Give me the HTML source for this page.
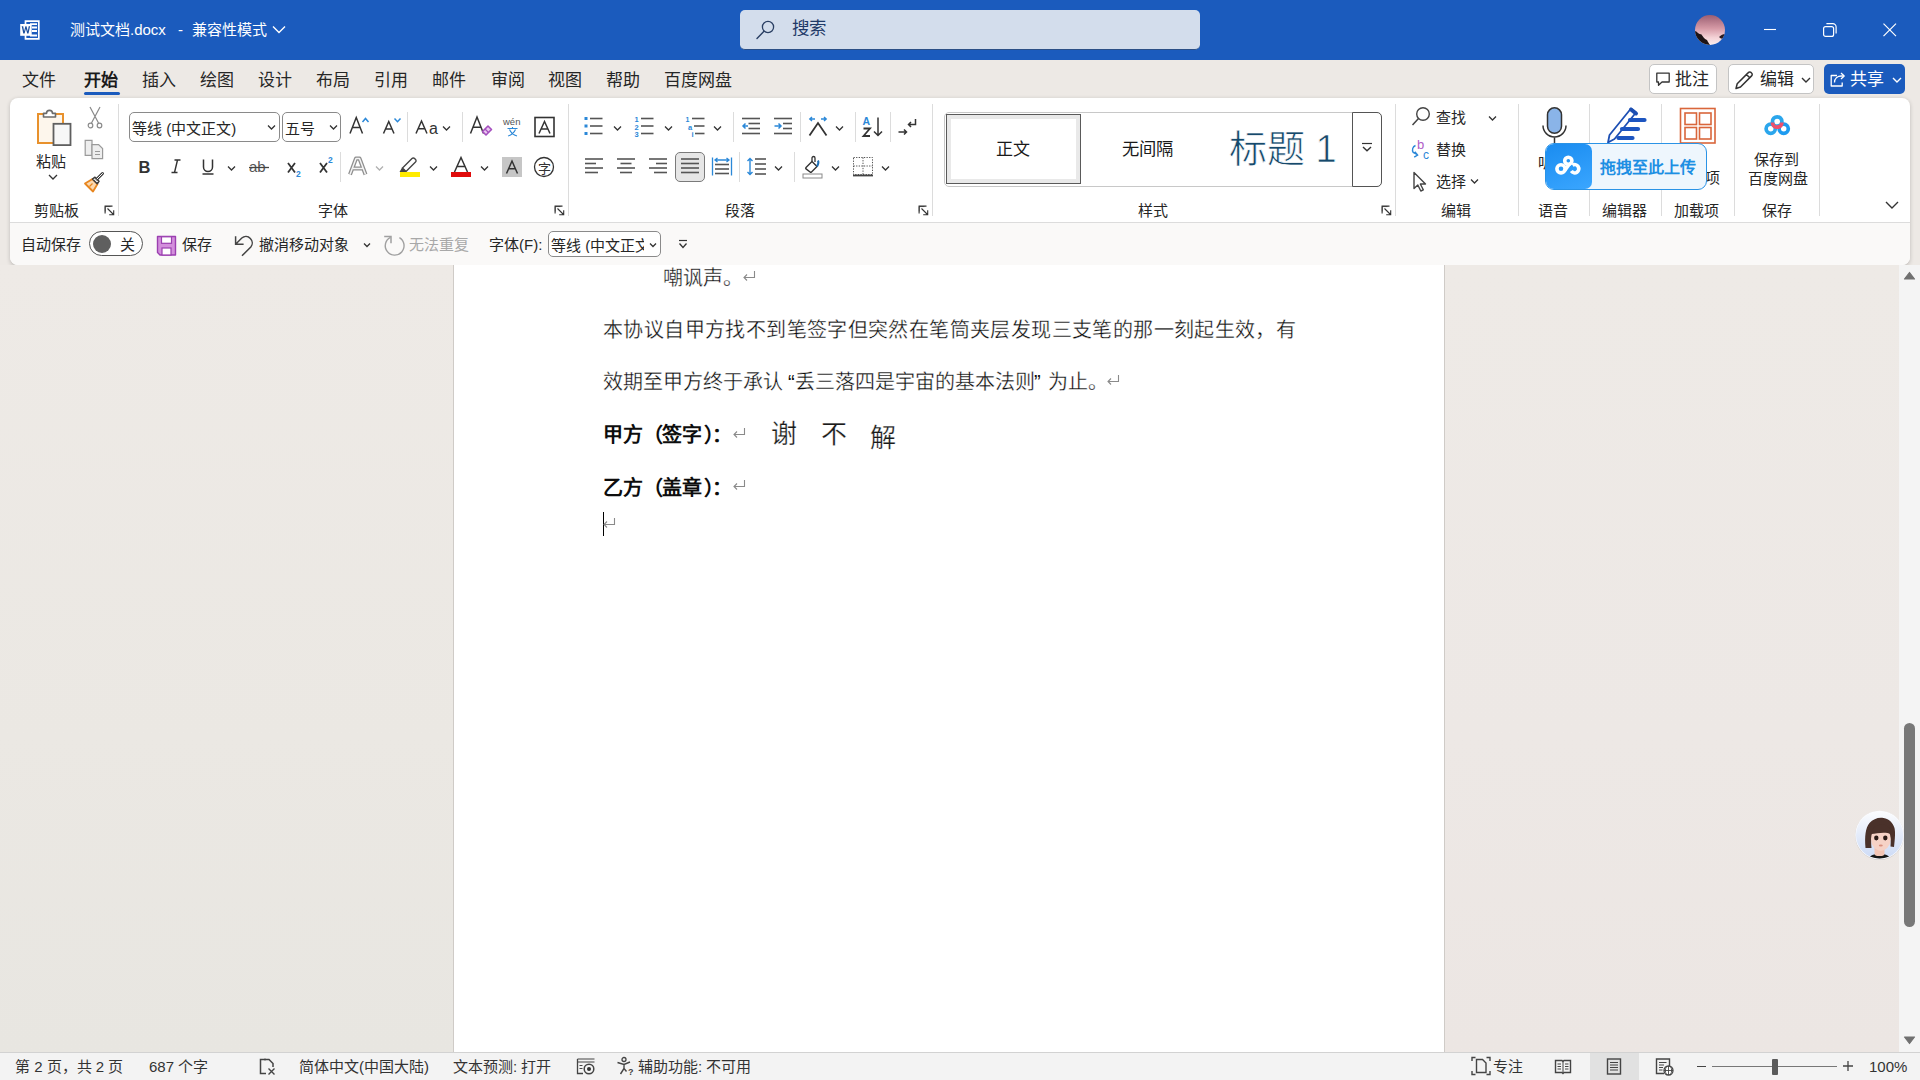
<!DOCTYPE html>
<html lang="zh-CN"><head><meta charset="utf-8"><style>
html,body{margin:0;padding:0;}
body{width:1920px;height:1080px;overflow:hidden;position:relative;background:#ede9e5;font-family:"Liberation Sans",sans-serif;}
.a{position:absolute;}
.t{position:absolute;line-height:1;white-space:nowrap;}
</style></head><body>
<div class="a" style="left:0px;top:0px;width:1920px;height:60px;background:#1b5bbd"></div><div class="a" style="left:10px;top:98px;width:1900px;height:167px;background:#fff;border-radius:8px;box-shadow:0 1.5px 4px rgba(0,0,0,.2)"></div><div class="a" style="left:10px;top:223px;width:1900px;height:42px;background:#faf9f8;border-radius:0 0 8px 8px"></div><div class="a" style="left:10px;top:222px;width:1900px;height:1px;background:#dcdcdc"></div><div class="a" style="left:0px;top:265px;width:453px;height:787px;background:linear-gradient(180deg,#eeeae6 0%,#ebe8e3 60%,#e8e6e1 100%)"></div><div class="a" style="left:1445px;top:265px;width:454px;height:787px;background:linear-gradient(180deg,#eeeae6 0%,#ede8e5 60%,#ece6e3 100%)"></div><div class="a" style="left:453px;top:265px;width:992px;height:787px;background:#fff;border-left:1px solid #cfcbc7;border-right:1px solid #cfcbc7;box-sizing:border-box"></div><div class="a" style="left:1899px;top:265px;width:21px;height:787px;background:#f4f4f4"></div><div class="a" style="left:0px;top:1052px;width:1920px;height:28px;background:#f3f3f3;border-top:1px solid #d2d2d2;box-sizing:border-box"></div><div class="t" style="left:70px;top:22px;font-size:15px;color:#fff;font-weight:400;">测试文档.docx</div><div class="t" style="left:178px;top:22px;font-size:15px;color:#fff;font-weight:400;">-</div><div class="t" style="left:192px;top:22px;font-size:15px;color:#fff;font-weight:400;">兼容性模式</div><div class="a" style="left:740px;top:10px;width:460px;height:40px;background:#d3ddec;border-radius:5px;border-bottom:1px solid #2b4f86;box-sizing:border-box"></div><div class="t" style="left:792px;top:20px;font-size:17.5px;color:#1f3a68;font-weight:400;">搜索</div><div class="t" style="left:22px;top:72px;font-size:17px;color:#262626;font-weight:400;">文件</div><div class="t" style="left:142px;top:72px;font-size:17px;color:#262626;font-weight:400;">插入</div><div class="t" style="left:200px;top:72px;font-size:17px;color:#262626;font-weight:400;">绘图</div><div class="t" style="left:258px;top:72px;font-size:17px;color:#262626;font-weight:400;">设计</div><div class="t" style="left:316px;top:72px;font-size:17px;color:#262626;font-weight:400;">布局</div><div class="t" style="left:374px;top:72px;font-size:17px;color:#262626;font-weight:400;">引用</div><div class="t" style="left:432px;top:72px;font-size:17px;color:#262626;font-weight:400;">邮件</div><div class="t" style="left:491px;top:72px;font-size:17px;color:#262626;font-weight:400;">审阅</div><div class="t" style="left:548px;top:72px;font-size:17px;color:#262626;font-weight:400;">视图</div><div class="t" style="left:606px;top:72px;font-size:17px;color:#262626;font-weight:400;">帮助</div><div class="t" style="left:664px;top:72px;font-size:17px;color:#262626;font-weight:400;">百度网盘</div><div class="t" style="left:84px;top:72px;font-size:17px;color:#1a1a1a;font-weight:700;">开始</div><div class="a" style="left:84px;top:92px;width:36px;height:3px;background:#1b5bbd;border-radius:2px"></div><div class="a" style="left:1649px;top:64px;width:68px;height:30px;background:#fff;border:1px solid #c4c4c4;border-radius:5px;box-sizing:border-box"></div><div class="t" style="left:1675px;top:71px;font-size:17px;color:#262626;font-weight:400;">批注</div><div class="a" style="left:1728px;top:64px;width:86px;height:30px;background:#fff;border:1px solid #c4c4c4;border-radius:5px;box-sizing:border-box"></div><div class="t" style="left:1760px;top:71px;font-size:17px;color:#262626;font-weight:400;">编辑</div><div class="a" style="left:1824px;top:64px;width:81px;height:30px;background:#1b5bbd;border-radius:5px"></div><div class="t" style="left:1850px;top:71px;font-size:17px;color:#fff;font-weight:400;">共享</div><div class="t" style="left:36px;top:154px;font-size:15px;color:#262626;font-weight:400;">粘贴</div><div class="t" style="left:34px;top:203px;font-size:15px;color:#262626;font-weight:400;">剪贴板</div><div class="t" style="left:318px;top:203px;font-size:15px;color:#262626;font-weight:400;">字体</div><div class="t" style="left:725px;top:203px;font-size:15px;color:#262626;font-weight:400;">段落</div><div class="t" style="left:1138px;top:203px;font-size:15px;color:#262626;font-weight:400;">样式</div><div class="t" style="left:1441px;top:203px;font-size:15px;color:#262626;font-weight:400;">编辑</div><div class="t" style="left:1538px;top:203px;font-size:15px;color:#262626;font-weight:400;">语音</div><div class="t" style="left:1602px;top:203px;font-size:15px;color:#262626;font-weight:400;">编辑器</div><div class="t" style="left:1674px;top:203px;font-size:15px;color:#262626;font-weight:400;">加载项</div><div class="t" style="left:1762px;top:203px;font-size:15px;color:#262626;font-weight:400;">保存</div><div class="a" style="left:129px;top:112px;width:151px;height:30px;background:#fff;border:1px solid #8a8a8a;border-radius:5px;box-sizing:border-box"></div><div class="t" style="left:132px;top:121px;font-size:15px;color:#262626;font-weight:400;">等线 (中文正文)</div><div class="a" style="left:282px;top:112px;width:59px;height:30px;background:#fff;border:1px solid #8a8a8a;border-radius:5px;box-sizing:border-box"></div><div class="t" style="left:285px;top:121px;font-size:15px;color:#262626;font-weight:400;">五号</div><div class="a" style="left:944px;top:112px;width:438px;height:75px;background:#fff;border:1px solid #c8c8c8;border-radius:5px;box-sizing:border-box"></div><div class="a" style="left:946px;top:114px;width:135px;height:70px;background:#fff;border:1px solid #5a5a5a;box-shadow:inset 0 0 0 4px #e9e9e9;box-sizing:border-box"></div><div class="t" style="left:996px;top:141px;font-size:17px;color:#1a1a1a;font-weight:400;">正文</div><div class="t" style="left:1122px;top:141px;font-size:17.3px;color:#1a1a1a;font-weight:400;">无间隔</div><div class="t" style="left:1229px;top:130px;font-size:38px;color:#16496b;font-weight:300;-webkit-text-stroke:0.7px #fff">标题 1</div><div class="a" style="left:1352px;top:112px;width:30px;height:75px;background:#fff;border:1px solid #555;border-radius:0 5px 5px 0;box-sizing:border-box"></div><div class="t" style="left:1436px;top:110px;font-size:15px;color:#262626;font-weight:400;">查找</div><div class="t" style="left:1436px;top:142px;font-size:15px;color:#262626;font-weight:400;">替换</div><div class="t" style="left:1436px;top:174px;font-size:15px;color:#262626;font-weight:400;">选择</div><div class="t" style="left:1538px;top:155px;font-size:15px;color:#262626;font-weight:400;">听写</div><div class="t" style="left:1675px;top:170px;font-size:15px;color:#262626;font-weight:400;">加载项</div><div class="t" style="left:1754px;top:152px;font-size:15px;color:#262626;font-weight:400;">保存到</div><div class="t" style="left:1748px;top:171px;font-size:15px;color:#262626;font-weight:400;">百度网盘</div><div class="t" style="left:21px;top:237px;font-size:15px;color:#262626;font-weight:400;">自动保存</div><div class="t" style="left:120px;top:237px;font-size:15px;color:#262626;font-weight:400;">关</div><div class="t" style="left:182px;top:237px;font-size:15px;color:#262626;font-weight:400;">保存</div><div class="t" style="left:259px;top:237px;font-size:15px;color:#262626;font-weight:400;">撤消移动对象</div><div class="t" style="left:409px;top:237px;font-size:15px;color:#a8a8a8;font-weight:400;">无法重复</div><div class="t" style="left:489px;top:237px;font-size:15px;color:#262626;font-weight:400;">字体(F):</div><div class="a" style="left:548px;top:231px;width:113px;height:26px;background:#fff;border:1px solid #8a8a8a;border-radius:5px;box-sizing:border-box"></div><div class="t" style="left:551px;top:238px;font-size:15px;color:#262626;font-weight:400;width:93px;overflow:hidden">等线 (中文正文</div><div class="t" style="left:663px;top:268px;font-size:20px;color:#0d0d0d;font-weight:400;-webkit-text-stroke:0.3px #fff;">嘲讽声</div><div class="t" style="left:723px;top:268px;font-size:20px;color:#0d0d0d;font-weight:400;-webkit-text-stroke:0.3px #fff;">。</div><div class="t" style="left:603px;top:320px;font-size:20px;color:#0d0d0d;font-weight:400;-webkit-text-stroke:0.3px #fff;letter-spacing:0.39px">本协议自甲方找不到笔签字但突然在笔筒夹层发现三支笔的那一刻起生效，有</div><div class="t" style="left:603px;top:372px;font-size:20px;color:#0d0d0d;font-weight:400;-webkit-text-stroke:0.3px #fff;">效期至甲方终于承认</div><div class="t" style="left:788px;top:372px;font-size:20px;color:#0d0d0d;font-weight:400;">“</div><div class="t" style="left:795px;top:372px;font-size:20px;color:#0d0d0d;font-weight:400;-webkit-text-stroke:0.3px #fff;">丢三落四是宇宙的基本法则</div><div class="t" style="left:1034px;top:372px;font-size:20px;color:#0d0d0d;font-weight:400;">”</div><div class="t" style="left:1048px;top:372px;font-size:20px;color:#0d0d0d;font-weight:400;-webkit-text-stroke:0.3px #fff;">为止。</div><div class="t" style="left:603px;top:425px;font-size:20px;color:#0d0d0d;font-weight:700;">甲方</div><div class="t" style="left:643px;top:425px;font-size:20px;color:#0d0d0d;font-weight:700;">（</div><div class="t" style="left:662px;top:425px;font-size:20px;color:#0d0d0d;font-weight:700;">签字</div><div class="t" style="left:704px;top:425px;font-size:20px;color:#0d0d0d;font-weight:700;">）</div><div class="t" style="left:712px;top:425px;font-size:20px;color:#0d0d0d;font-weight:700;">：</div><div class="t" style="left:603px;top:478px;font-size:20px;color:#0d0d0d;font-weight:700;">乙方</div><div class="t" style="left:643px;top:478px;font-size:20px;color:#0d0d0d;font-weight:700;">（</div><div class="t" style="left:662px;top:478px;font-size:20px;color:#0d0d0d;font-weight:700;">盖章</div><div class="t" style="left:704px;top:478px;font-size:20px;color:#0d0d0d;font-weight:700;">）</div><div class="t" style="left:712px;top:478px;font-size:20px;color:#0d0d0d;font-weight:700;">：</div><div class="t" style="left:771px;top:421px;font-size:26px;color:#1a1a1a;font-weight:300;-webkit-text-stroke:0.25px #fff">谢</div><div class="t" style="left:821px;top:421px;font-size:26px;color:#1a1a1a;font-weight:300;-webkit-text-stroke:0.25px #fff">不</div><div class="t" style="left:870px;top:425px;font-size:26px;color:#1a1a1a;font-weight:300;-webkit-text-stroke:0.25px #fff">解</div><div class="a" style="left:603px;top:512px;width:1px;height:24px;background:#000"></div><div class="t" style="left:15px;top:1059px;font-size:15px;color:#333;font-weight:400;">第 2 页，共 2 页</div><div class="t" style="left:149px;top:1059px;font-size:15px;color:#333;font-weight:400;">687 个字</div><div class="t" style="left:299px;top:1059px;font-size:15px;color:#333;font-weight:400;">简体中文(中国大陆)</div><div class="t" style="left:453px;top:1059px;font-size:15px;color:#333;font-weight:400;">文本预测: 打开</div><div class="t" style="left:638px;top:1059px;font-size:15px;color:#333;font-weight:400;">辅助功能: 不可用</div><div class="t" style="left:1493px;top:1059px;font-size:15px;color:#333;font-weight:400;">专注</div><div class="t" style="left:1869px;top:1059px;font-size:15px;color:#333;font-weight:400;">100%</div><svg class="a" style="left:18px;top:18px;" width="24" height="24" viewBox="0 0 24 24"><path d="M7.5 3.2h13.3v17.6H7.5z" fill="none" stroke="#fff" stroke-width="1.7"/><path d="M12 6.2h7M14 9.5h5M14 13h5M12 17.5h7" stroke="#fff" stroke-width="1.8"/><rect x="2.2" y="6" width="11.5" height="11.8" fill="#fff"/><path d="M3.7 8.3l1.6 7.2h1.3l1.3-4.8 1.3 4.8h1.3l1.6-7.2h-1.4l-.9 4.9-1.3-4.9H7.4l-1.3 4.9-.9-4.9z" fill="#1b4f9e"/></svg><svg class="a" style="left:752px;top:17px;" width="24" height="24" viewBox="0 0 24 24"><circle cx="16" cy="10" r="5.6" fill="none" stroke="#2a3f63" stroke-width="1.3"/><path d="M12 14.2L5 21.5" stroke="#2a3f63" stroke-width="1.4" stroke-linecap="round"/></svg><svg class="a" style="left:270px;top:23px;" width="18" height="12" viewBox="0 0 18 12"><path d="M3 3.5l6 6 6-6" fill="none" stroke="#fff" stroke-width="1.4"/></svg><div class="a" style="left:1695px;top:15px;width:30px;height:30px;border-radius:50%;overflow:hidden;background:linear-gradient(180deg,#9a5e72 0%,#d69aa6 45%,#f4d2d6 75%,#fbeeee 100%)"><svg width="30" height="30" style="position:absolute;left:0;top:0"><path d="M0 16 C3 17 4 20 6 19 C8 21 9 24 12 25 C13 27 15 30 15 30 L0 30Z" fill="#1d1416"/><path d="M24 22 C26 20 28 19 30 19 L30 24 C28 24 26 24 24 22Z" fill="#2a1c20"/></svg></div><svg class="a" style="left:1760px;top:20px;" width="20" height="20" viewBox="0 0 20 20"><path d="M4 9.5h12" stroke="#fff" stroke-width="1.1"/></svg><svg class="a" style="left:1820px;top:20px;" width="20" height="20" viewBox="0 0 20 20"><rect x="3.6" y="6.6" width="10" height="9.8" rx="2" fill="none" stroke="#fff" stroke-width="1.2"/><path d="M6.4 3.6h6.4a3.3 3.3 0 0 1 3.3 3.3v6.5" fill="none" stroke="#fff" stroke-width="1.2"/></svg><svg class="a" style="left:1880px;top:20px;" width="20" height="20" viewBox="0 0 20 20"><path d="M3.5 3.7l12.5 12.5M16 3.7L3.5 16.2" stroke="#fff" stroke-width="1.2"/></svg><svg class="a" style="left:1654px;top:70px;" width="18" height="18" viewBox="0 0 18 18"><path d="M2.8 3.2h12.4v8.8H8l-3.5 3.2v-3.2H2.8z" fill="none" stroke="#333" stroke-width="1.3" stroke-linejoin="round"/></svg><svg class="a" style="left:1732px;top:68px;" width="24" height="24" viewBox="0 0 24 24"><path d="M4 20.5l1.2-4.8L16.3 4.6a2 2 0 0 1 2.9 0l.4.4a2 2 0 0 1 0 2.9L8.5 19z M4 20.5l4.5-1.5 M14.5 6.5l3.2 3.2" fill="none" stroke="#333" stroke-width="1.5" stroke-linejoin="round"/></svg><svg class="a" style="left:1799px;top:75px;" width="14" height="10" viewBox="0 0 14 10"><path d="M3 3l4 4 4-4" fill="none" stroke="#333" stroke-width="1.4"/></svg><svg class="a" style="left:1828px;top:70px;" width="20" height="20" viewBox="0 0 20 20"><path d="M9 5.5H3.2v10.5h11v-3.5" fill="none" stroke="#fff" stroke-width="1.3" stroke-linejoin="round"/><path d="M6.5 12.5c0-4 3-6.5 7-6.5h2" fill="none" stroke="#fff" stroke-width="1.3"/><path d="M13 3l3.2 3-3.2 3" fill="none" stroke="#fff" stroke-width="1.3" stroke-linejoin="round"/></svg><svg class="a" style="left:1890px;top:75px;" width="14" height="10" viewBox="0 0 14 10"><path d="M3 3l4 4 4-4" fill="none" stroke="#fff" stroke-width="1.4"/></svg><svg class="a" style="left:30px;top:104px;" width="48" height="46" viewBox="0 0 48 46"><rect x="8" y="10" width="25" height="29" fill="#fdf6ec" stroke="#e8912c" stroke-width="2"/><path d="M13.5 13v-3.6h3a3 3 0 0 1 6 0h3V13z" fill="#fff" stroke="#6b6b6b" stroke-width="1.6" stroke-linejoin="round"/><rect x="23.5" y="19.8" width="17" height="21.3" fill="#f7f7f7" stroke="#5f5f5f" stroke-width="1.8"/></svg><svg class="a" style="left:47px;top:172px;" width="12" height="10" viewBox="0 0 12 10"><path d="M2 3l4 4 4-4" fill="none" stroke="#333" stroke-width="1.3"/></svg><svg class="a" style="left:84px;top:104px;" width="22" height="26" viewBox="0 0 22 26"><path d="M6 3l8.5 16M16 3L7.5 19" stroke="#8a8a8a" stroke-width="1.2"/><circle cx="6.5" cy="21.5" r="2.3" fill="#fff" stroke="#8a8a8a" stroke-width="1.2"/><circle cx="15.5" cy="21.5" r="2.3" fill="#fff" stroke="#8a8a8a" stroke-width="1.2"/></svg><svg class="a" style="left:82px;top:137px;" width="24" height="24" viewBox="0 0 24 24"><path d="M3.2 3.4h6.8v15H3.2z" fill="#eee" stroke="#9a9a9a" stroke-width="1.2"/><path d="M10 7.6h6.6l4 4v10h-10.6z" fill="#eee" stroke="#9a9a9a" stroke-width="1.2"/><path d="M13 14.5h5M13 17.5h5" stroke="#9a9a9a" stroke-width="1.1"/></svg><svg class="a" style="left:82px;top:169px;" width="24" height="24" viewBox="0 0 24 24"><path d="M3 14.5l7.5-4.5 5 5-4.5 7.5z" fill="#fbd9b0" stroke="#e8861f" stroke-width="1.8" stroke-linejoin="round"/><path d="M7.5 17.5l3-3" stroke="#e8861f" stroke-width="1.3"/><path d="M10.5 10l2.5-1.8 4 4-1.8 2.5z" fill="#fff" stroke="#3c3c3c" stroke-width="1.5" stroke-linejoin="round"/><path d="M15 10l5.5-5.5" stroke="#3c3c3c" stroke-width="3" stroke-linecap="round"/><path d="M15 10l5.5-5.5" stroke="#fff" stroke-width="1" stroke-linecap="round"/></svg><svg class="a" style="left:104px;top:205px;" width="11" height="11" viewBox="0 0 11 11"><path d="M1 9.5V1.5h8.5" fill="none" stroke="#333" stroke-width="1.2" transform="scale(0.62) translate(1,1)"/><path d="M0.8 0.8v8.8" stroke="#444" stroke-width="0"/><path d="M1 1v9h9" fill="none" stroke="none"/><path d="M1.1 8.5V1.1H8.5" fill="none" stroke="#333" stroke-width="1.1"/><path d="M3.5 3.5L9.5 9.5M9.7 5.2v4.5H5.2" fill="none" stroke="#333" stroke-width="1.1"/></svg><div class="a" style="left:118px;top:104px;width:1px;height:112px;background:#dcdcdc"></div><svg class="a" style="left:266px;top:123px;" width="11" height="8" viewBox="0 0 11 8"><path d="M2 2.5l3.5 3.5l3.5 -3.5" fill="none" stroke="#333" stroke-width="1.3"/></svg><svg class="a" style="left:328px;top:123px;" width="11" height="8" viewBox="0 0 11 8"><path d="M2 2.5l3.5 3.5l3.5 -3.5" fill="none" stroke="#333" stroke-width="1.3"/></svg><svg class="a" style="left:345px;top:112px;" width="30" height="26" viewBox="0 0 30 26"><path d="M5 21.5L11.25 5.5L17.5 21.5M7.5 15.42H15.0" fill="none" stroke="#333" stroke-width="1.5"/><path d="M17.5 10l3-3.5 3 3.5" fill="none" stroke="#2b88d8" stroke-width="1.5"/></svg><svg class="a" style="left:380px;top:112px;" width="26" height="26" viewBox="0 0 26 26"><path d="M3.5 21.5L8.75 9.5L14.0 21.5M5.6 16.939999999999998H11.9" fill="none" stroke="#333" stroke-width="1.5"/><path d="M14.5 6.5l3 3.2 3-3.2" fill="none" stroke="#2b88d8" stroke-width="1.5"/></svg><div class="a" style="left:407px;top:112px;width:1px;height:30px;background:#dcdcdc"></div><svg class="a" style="left:412px;top:112px;" width="30" height="26" viewBox="0 0 30 26"><path d="M4 21.5L9.5 9L15 21.5M6.2 16.75H12.8" fill="none" stroke="#333" stroke-width="1.5"/><text x="17" y="21.5" font-family="Liberation Sans" font-size="16" fill="#333">a</text></svg><svg class="a" style="left:441px;top:124px;" width="11" height="8" viewBox="0 0 11 8"><path d="M2 2.5l3.5 3.5l3.5 -3.5" fill="none" stroke="#333" stroke-width="1.3"/></svg><div class="a" style="left:462px;top:112px;width:1px;height:30px;background:#dcdcdc"></div><svg class="a" style="left:466px;top:112px;" width="30" height="28" viewBox="0 0 30 28"><path d="M4.5 21.5L11.0 5L17.5 21.5M7.1 15.23H14.9" fill="none" stroke="#333" stroke-width="1.5"/><path d="M16.5 19.5l5.5-5.5 3.5 3.5-5.5 5.5z" fill="#e9c7ef" stroke="#a54fbf" stroke-width="1.6" stroke-linejoin="round"/><path d="M19 17l3.5 3.5" stroke="#a54fbf" stroke-width="1.2"/></svg><svg class="a" style="left:500px;top:112px;" width="26" height="28" viewBox="0 0 26 28"><text x="3" y="13" font-family="Liberation Sans" font-size="9.5" fill="#555">wén</text><path d="M7.5 16.5h10M12.5 15v1.5M9.5 17.5c1.5 3.5 4 5.5 7.5 6.5M15.5 17.5c-1.5 3.5-4 5.5-7.5 6.5" fill="none" stroke="#2b88d8" stroke-width="1.1"/></svg><svg class="a" style="left:530px;top:112px;" width="28" height="28" viewBox="0 0 28 28"><rect x="5" y="5.5" width="19" height="19" fill="none" stroke="#333" stroke-width="1.6"/><path d="M9 21.5L14.5 9.5L20 21.5M11.2 16.939999999999998H17.8" fill="none" stroke="#333" stroke-width="1.5"/></svg><svg class="a" style="left:134px;top:155px;" width="20" height="22" viewBox="0 0 20 22"><text x="4.5" y="17.5" font-family="Liberation Sans" font-weight="700" font-size="16.5" fill="#333">B</text></svg><svg class="a" style="left:166px;top:155px;" width="20" height="22" viewBox="0 0 20 22"><path d="M8.5 5h6M5.5 17.5h6M11.5 5l-3 12.5" fill="none" stroke="#333" stroke-width="1.4"/></svg><svg class="a" style="left:198px;top:155px;" width="20" height="22" viewBox="0 0 20 22"><path d="M5.5 4.5v7.5a4.5 4.5 0 0 0 9 0V4.5" fill="none" stroke="#333" stroke-width="1.5"/><path d="M4.5 19h11" stroke="#333" stroke-width="1.5"/></svg><svg class="a" style="left:226px;top:164px;" width="11" height="8" viewBox="0 0 11 8"><path d="M2 2.5l3.5 3.5l3.5 -3.5" fill="none" stroke="#333" stroke-width="1.3"/></svg><svg class="a" style="left:246px;top:155px;" width="26" height="22" viewBox="0 0 26 22"><text x="3" y="17" font-family="Liberation Sans" font-size="15" fill="#555">ab</text><path d="M3 12.5h20" stroke="#444" stroke-width="1.3"/></svg><svg class="a" style="left:284px;top:155px;" width="22" height="24" viewBox="0 0 22 24"><path d="M4 8l7 9.5M11 8l-7 9.5" stroke="#333" stroke-width="1.8"/><text x="12" y="22" font-family="Liberation Sans" font-weight="700" font-size="8.5" fill="#2b88d8">2</text></svg><svg class="a" style="left:316px;top:152px;" width="22" height="24" viewBox="0 0 22 24"><path d="M4 11l7 9.5M11 11l-7 9.5" stroke="#333" stroke-width="1.8"/><text x="12" y="10.5" font-family="Liberation Sans" font-weight="700" font-size="8.5" fill="#2b88d8">2</text></svg><div class="a" style="left:340px;top:152px;width:1px;height:30px;background:#dcdcdc"></div><svg class="a" style="left:344px;top:153px;" width="28" height="26" viewBox="0 0 28 26"><path d="M6 21.5L12 5.5h3.5L21.5 21.5M9 15.5h9.5" fill="none" stroke="#8f8f8f" stroke-width="4" stroke-linejoin="round"/><path d="M6 21.5L12 5.5h3.5L21.5 21.5M9 15.5h9.5" fill="none" stroke="#f4f4f4" stroke-width="1.5" stroke-linejoin="round"/></svg><svg class="a" style="left:374px;top:164px;" width="11" height="8" viewBox="0 0 11 8"><path d="M2 2.5l3.5 3.5l3.5 -3.5" fill="none" stroke="#b0b0b0" stroke-width="1.3"/></svg><svg class="a" style="left:397px;top:153px;" width="26" height="26" viewBox="0 0 26 26"><path d="M5.5 15l9.5-9.5a1.8 1.8 0 0 1 2.6 0l.9.9a1.8 1.8 0 0 1 0 2.6L9 18.5z" fill="#fff" stroke="#444" stroke-width="1.4"/><path d="M5.5 15L3.5 18.5H7.5L9 18.5" fill="#444" stroke="#444" stroke-width="1.2"/><rect x="3" y="19" width="20" height="5" fill="#ffeb00"/></svg><svg class="a" style="left:428px;top:164px;" width="11" height="8" viewBox="0 0 11 8"><path d="M2 2.5l3.5 3.5l3.5 -3.5" fill="none" stroke="#333" stroke-width="1.3"/></svg><svg class="a" style="left:448px;top:153px;" width="26" height="26" viewBox="0 0 26 26"><path d="M6.5 19.0L13.0 4.5L19.5 19.0M9.1 13.49H16.9" fill="none" stroke="#333" stroke-width="1.5"/><rect x="3" y="19" width="20" height="5" fill="#e00b0b"/></svg><svg class="a" style="left:479px;top:164px;" width="11" height="8" viewBox="0 0 11 8"><path d="M2 2.5l3.5 3.5l3.5 -3.5" fill="none" stroke="#333" stroke-width="1.3"/></svg><svg class="a" style="left:502px;top:157px;" width="20" height="20" viewBox="0 0 20 20"><rect width="20" height="20" fill="#c6c6c6"/><path d="M4.5 16.5L10.0 4L15.5 16.5M6.7 11.75H13.3" fill="none" stroke="#333" stroke-width="1.5"/></svg><svg class="a" style="left:531px;top:154px;" width="26" height="26" viewBox="0 0 26 26"><circle cx="13" cy="13" r="9.5" fill="none" stroke="#333" stroke-width="1.3"/><text x="6.5" y="18.5" font-family="Liberation Sans" font-size="13" fill="#333">字</text></svg><svg class="a" style="left:554px;top:205px;" width="11" height="11" viewBox="0 0 11 11"><path d="M1 9.5V1.5h8.5" fill="none" stroke="#333" stroke-width="1.2" transform="scale(0.62) translate(1,1)"/><path d="M0.8 0.8v8.8" stroke="#444" stroke-width="0"/><path d="M1 1v9h9" fill="none" stroke="none"/><path d="M1.1 8.5V1.1H8.5" fill="none" stroke="#333" stroke-width="1.1"/><path d="M3.5 3.5L9.5 9.5M9.7 5.2v4.5H5.2" fill="none" stroke="#333" stroke-width="1.1"/></svg><div class="a" style="left:568px;top:104px;width:1px;height:112px;background:#dcdcdc"></div><svg class="a" style="left:582px;top:114px;" width="24" height="26" viewBox="0 0 24 26"><rect x="2.5" y="3" width="3" height="3" fill="#2b88d8"/><rect x="2.5" y="10.5" width="3" height="3" fill="#2b88d8"/><rect x="2.5" y="18" width="3" height="3" fill="#2b88d8"/><path d="M8 4.5H20.5" stroke="#555" stroke-width="1.6"/><path d="M8 12H20.5" stroke="#555" stroke-width="1.6"/><path d="M8 19.5H20.5" stroke="#555" stroke-width="1.6"/></svg><svg class="a" style="left:612px;top:124px;" width="11" height="8" viewBox="0 0 11 8"><path d="M2 2.5l3.5 3.5l3.5 -3.5" fill="none" stroke="#333" stroke-width="1.3"/></svg><svg class="a" style="left:633px;top:114px;" width="24" height="26" viewBox="0 0 24 26"><text x="1.5" y="8" font-family="Liberation Sans" font-weight="700" font-size="7.5" fill="#2b88d8">1</text><text x="1.5" y="15.5" font-family="Liberation Sans" font-weight="700" font-size="7.5" fill="#2b88d8">2</text><text x="1.5" y="23" font-family="Liberation Sans" font-weight="700" font-size="7.5" fill="#2b88d8">3</text><path d="M8 4.5H20.5" stroke="#555" stroke-width="1.6"/><path d="M8 12H20.5" stroke="#555" stroke-width="1.6"/><path d="M8 19.5H20.5" stroke="#555" stroke-width="1.6"/></svg><svg class="a" style="left:663px;top:124px;" width="11" height="8" viewBox="0 0 11 8"><path d="M2 2.5l3.5 3.5l3.5 -3.5" fill="none" stroke="#333" stroke-width="1.3"/></svg><svg class="a" style="left:684px;top:114px;" width="24" height="26" viewBox="0 0 24 26"><text x="1.5" y="8" font-family="Liberation Sans" font-weight="700" font-size="7" fill="#2b88d8">1</text><text x="4" y="15.5" font-family="Liberation Sans" font-weight="700" font-size="7.5" fill="#2b88d8">a</text><text x="7.5" y="23" font-family="Liberation Sans" font-weight="700" font-size="7.5" fill="#2b88d8">i</text><path d="M8 4.5H20.5" stroke="#555" stroke-width="1.6"/><path d="M10 12H20.5" stroke="#555" stroke-width="1.6"/><path d="M11 19.5H20.5" stroke="#555" stroke-width="1.6"/></svg><svg class="a" style="left:712px;top:124px;" width="11" height="8" viewBox="0 0 11 8"><path d="M2 2.5l3.5 3.5l3.5 -3.5" fill="none" stroke="#333" stroke-width="1.3"/></svg><div class="a" style="left:733px;top:112px;width:1px;height:30px;background:#dcdcdc"></div><svg class="a" style="left:740px;top:114px;" width="22" height="24" viewBox="0 0 22 24"><path d="M2 4.5H20" stroke="#555" stroke-width="1.6"/><path d="M8.5 9.5H20" stroke="#555" stroke-width="1.6"/><path d="M8.5 14.5H20" stroke="#555" stroke-width="1.6"/><path d="M2 19.5H20" stroke="#555" stroke-width="1.6"/><path d="M3 12h5M5.5 9.5L3 12l2.5 2.5" fill="none" stroke="#2b88d8" stroke-width="1.5"/></svg><svg class="a" style="left:772px;top:114px;" width="22" height="24" viewBox="0 0 22 24"><path d="M2 4.5H20" stroke="#555" stroke-width="1.6"/><path d="M11 9.5H20" stroke="#555" stroke-width="1.6"/><path d="M11 14.5H20" stroke="#555" stroke-width="1.6"/><path d="M2 19.5H20" stroke="#555" stroke-width="1.6"/><path d="M2.5 12h6M6.5 9.5L9 12l-2.5 2.5" fill="none" stroke="#2b88d8" stroke-width="1.5"/></svg><div class="a" style="left:800px;top:112px;width:1px;height:30px;background:#dcdcdc"></div><svg class="a" style="left:805px;top:114px;" width="26" height="26" viewBox="0 0 26 26"><path d="M4.5 21.5L13 9l8.5 12.5" fill="none" stroke="#333" stroke-width="1.8"/><path d="M5 5h5M7 3l-2.2 2 2.2 2M16 5h5M19 3l2.2 2L19 7" fill="none" stroke="#2b88d8" stroke-width="1.4"/></svg><svg class="a" style="left:834px;top:124px;" width="11" height="8" viewBox="0 0 11 8"><path d="M2 2.5l3.5 3.5l3.5 -3.5" fill="none" stroke="#333" stroke-width="1.3"/></svg><div class="a" style="left:855px;top:112px;width:1px;height:30px;background:#dcdcdc"></div><svg class="a" style="left:861px;top:114px;" width="26" height="26" viewBox="0 0 26 26"><text x="1.5" y="11" font-family="Liberation Sans" font-weight="700" font-size="10.5" fill="#2b88d8">A</text><path d="M2.5 14.5h6.5l-6.5 7.5h6.5" fill="none" stroke="#333" stroke-width="1.8"/><path d="M17 3.5v18M13 17.5l4 4 4-4" fill="none" stroke="#333" stroke-width="1.5"/></svg><div class="a" style="left:890px;top:112px;width:1px;height:30px;background:#dcdcdc"></div><svg class="a" style="left:896px;top:114px;" width="26" height="26" viewBox="0 0 26 26"><path d="M19.5 5v5.5h-7M15 8l-2.5 2.5 2.5 2.5" fill="none" stroke="#333" stroke-width="1.5"/><path d="M2.5 18h8M8 15.5l2.5 2.5L8 20.5" fill="none" stroke="#333" stroke-width="1.5"/></svg><svg class="a" style="left:585px;top:157px;" width="20" height="20" viewBox="0 0 20 20"><path d="M0 2H18" stroke="#555" stroke-width="1.6"/><path d="M0 6.5H11" stroke="#555" stroke-width="1.6"/><path d="M0 11H18" stroke="#555" stroke-width="1.6"/><path d="M0 15.5H13" stroke="#555" stroke-width="1.6"/></svg><svg class="a" style="left:617px;top:157px;" width="20" height="20" viewBox="0 0 20 20"><path d="M0 2H18" stroke="#555" stroke-width="1.6"/><path d="M3.5 6.5H14.5" stroke="#555" stroke-width="1.6"/><path d="M0 11H18" stroke="#555" stroke-width="1.6"/><path d="M3 15.5H15" stroke="#555" stroke-width="1.6"/></svg><svg class="a" style="left:649px;top:157px;" width="20" height="20" viewBox="0 0 20 20"><path d="M0 2H18" stroke="#555" stroke-width="1.6"/><path d="M7 6.5H18" stroke="#555" stroke-width="1.6"/><path d="M0 11H18" stroke="#555" stroke-width="1.6"/><path d="M5 15.5H18" stroke="#555" stroke-width="1.6"/></svg><div class="a" style="left:675px;top:152px;width:30px;height:30px;background:#e6e6e6;border:1px solid #7a7a7a;border-radius:5px;box-sizing:border-box"></div><svg class="a" style="left:681px;top:157px;" width="20" height="20" viewBox="0 0 20 20"><path d="M0 2H18" stroke="#555" stroke-width="1.6"/><path d="M0 6.5H18" stroke="#555" stroke-width="1.6"/><path d="M0 11H18" stroke="#555" stroke-width="1.6"/><path d="M0 15.5H18" stroke="#555" stroke-width="1.6"/></svg><svg class="a" style="left:710px;top:155px;" width="24" height="24" viewBox="0 0 24 24"><path d="M2.5 2.5v18M21.5 2.5v18" stroke="#2b88d8" stroke-width="1.3"/><path d="M5 5h14M7.5 3l-2.5 2 2.5 2M16.5 3l2.5 2-2.5 2" fill="none" stroke="#2b88d8" stroke-width="1.3"/><path d="M5 9.5H19" stroke="#555" stroke-width="1.6"/><path d="M5 14H19" stroke="#555" stroke-width="1.6"/><path d="M5 18.5H19" stroke="#555" stroke-width="1.6"/></svg><div class="a" style="left:739px;top:152px;width:1px;height:30px;background:#dcdcdc"></div><svg class="a" style="left:745px;top:155px;" width="26" height="24" viewBox="0 0 26 24"><path d="M5 3.5v16M2.5 6l2.5-2.5L7.5 6M2.5 17l2.5 2.5 2.5-2.5" fill="none" stroke="#2b88d8" stroke-width="1.4"/><path d="M10 4H21" stroke="#555" stroke-width="1.6"/><path d="M10 9H21" stroke="#555" stroke-width="1.6"/><path d="M10 14H21" stroke="#555" stroke-width="1.6"/><path d="M10 19H21" stroke="#555" stroke-width="1.6"/></svg><svg class="a" style="left:773px;top:164px;" width="11" height="8" viewBox="0 0 11 8"><path d="M2 2.5l3.5 3.5l3.5 -3.5" fill="none" stroke="#333" stroke-width="1.3"/></svg><div class="a" style="left:794px;top:152px;width:1px;height:30px;background:#dcdcdc"></div><svg class="a" style="left:800px;top:154px;" width="26" height="26" viewBox="0 0 26 26"><path d="M6 13.5L12 7.5l5 5-5.5 5.5a1 1 0 0 1-1.4 0L6 14.9a1 1 0 0 1 0-1.4z" fill="#fff" stroke="#333" stroke-width="1.4"/><path d="M12 7.5V4a1.5 1.5 0 0 1 3 0v4" fill="none" stroke="#333" stroke-width="1.3"/><path d="M17 12.5c1.5-2.5 2-4 1-6" fill="none" stroke="#1e6fb5" stroke-width="2"/><rect x="3" y="20" width="19" height="4" fill="#fff" stroke="#8a8a8a" stroke-width="1"/></svg><svg class="a" style="left:830px;top:164px;" width="11" height="8" viewBox="0 0 11 8"><path d="M2 2.5l3.5 3.5l3.5 -3.5" fill="none" stroke="#333" stroke-width="1.3"/></svg><svg class="a" style="left:851px;top:155px;" width="24" height="24" viewBox="0 0 24 24"><path d="M2.5 2.5h19v17h-19z M12 2.5v17 M2.5 11h19" fill="none" stroke="#555" stroke-width="1" stroke-dasharray="1.3 1.3"/><path d="M2 20.5h20" stroke="#444" stroke-width="1.8"/></svg><svg class="a" style="left:880px;top:164px;" width="11" height="8" viewBox="0 0 11 8"><path d="M2 2.5l3.5 3.5l3.5 -3.5" fill="none" stroke="#333" stroke-width="1.3"/></svg><svg class="a" style="left:918px;top:205px;" width="11" height="11" viewBox="0 0 11 11"><path d="M1 9.5V1.5h8.5" fill="none" stroke="#333" stroke-width="1.2" transform="scale(0.62) translate(1,1)"/><path d="M0.8 0.8v8.8" stroke="#444" stroke-width="0"/><path d="M1 1v9h9" fill="none" stroke="none"/><path d="M1.1 8.5V1.1H8.5" fill="none" stroke="#333" stroke-width="1.1"/><path d="M3.5 3.5L9.5 9.5M9.7 5.2v4.5H5.2" fill="none" stroke="#333" stroke-width="1.1"/></svg><div class="a" style="left:932px;top:104px;width:1px;height:112px;background:#dcdcdc"></div><svg class="a" style="left:1359px;top:140px;" width="16" height="14" viewBox="0 0 16 14"><path d="M3 3.5h10" stroke="#333" stroke-width="1.2"/><path d="M4 7l4 3.8L12 7" fill="none" stroke="#333" stroke-width="1.4"/></svg><svg class="a" style="left:1381px;top:205px;" width="11" height="11" viewBox="0 0 11 11"><path d="M1 9.5V1.5h8.5" fill="none" stroke="#333" stroke-width="1.2" transform="scale(0.62) translate(1,1)"/><path d="M0.8 0.8v8.8" stroke="#444" stroke-width="0"/><path d="M1 1v9h9" fill="none" stroke="none"/><path d="M1.1 8.5V1.1H8.5" fill="none" stroke="#333" stroke-width="1.1"/><path d="M3.5 3.5L9.5 9.5M9.7 5.2v4.5H5.2" fill="none" stroke="#333" stroke-width="1.1"/></svg><div class="a" style="left:1395px;top:104px;width:1px;height:112px;background:#dcdcdc"></div><svg class="a" style="left:1408px;top:104px;" width="26" height="26" viewBox="0 0 26 26"><circle cx="15" cy="10" r="6.3" fill="none" stroke="#444" stroke-width="1.4"/><path d="M10.5 14.5L4.5 21" stroke="#444" stroke-width="1.5"/></svg><svg class="a" style="left:1487px;top:114px;" width="11" height="8" viewBox="0 0 11 8"><path d="M2 2.5l3.5 3.5l3.5 -3.5" fill="none" stroke="#333" stroke-width="1.3"/></svg><svg class="a" style="left:1408px;top:136px;" width="26" height="26" viewBox="0 0 26 26"><text x="9" y="12.5" font-family="Liberation Sans" font-size="13" fill="#b05cc7">b</text><text x="15" y="22.5" font-family="Liberation Sans" font-size="12" fill="#2b88d8">c</text><path d="M7.5 9.5c-2.8 1.2-3.8 4.2-2.3 7l4.2 2M6.8 15.8l2.8 3.3-3.4 2" fill="none" stroke="#2b88d8" stroke-width="1.4"/></svg><svg class="a" style="left:1408px;top:168px;" width="26" height="26" viewBox="0 0 26 26"><path d="M6 4.5v16l3.8-3.5 3 6 2.5-1.2-3-5.8H17.5z" fill="#fff" stroke="#444" stroke-width="1.4" stroke-linejoin="round"/></svg><svg class="a" style="left:1469px;top:177px;" width="11" height="8" viewBox="0 0 11 8"><path d="M2 2.5l3.5 3.5l3.5 -3.5" fill="none" stroke="#333" stroke-width="1.3"/></svg><div class="a" style="left:1518px;top:104px;width:1px;height:112px;background:#dcdcdc"></div><svg class="a" style="left:1538px;top:104px;" width="30" height="42" viewBox="0 0 30 42"><rect x="9.5" y="3.8" width="14" height="25.5" rx="7" fill="#8ab4e8" stroke="#333" stroke-width="1.5"/><path d="M5 21.5a11.5 11.5 0 0 0 23 0" fill="none" stroke="#333" stroke-width="1.5"/><path d="M16.5 33.5v8" stroke="#333" stroke-width="1.5"/></svg><div class="a" style="left:1589px;top:104px;width:1px;height:112px;background:#dcdcdc"></div><svg class="a" style="left:1604px;top:104px;" width="46" height="42" viewBox="0 0 46 42"><path d="M4 38.5l1.5-7.5L27 4.5l5 4L10.5 35z" fill="#fff" stroke="#1d4fb3" stroke-width="1.8" stroke-linejoin="round"/><path d="M27 5.5l5 4" stroke="#1d4fb3" stroke-width="4" stroke-linecap="round"/><path d="M26 16h14.5" stroke="#1d55c0" stroke-width="4.2" stroke-linecap="round"/><path d="M18 25h16" stroke="#1d55c0" stroke-width="4.2" stroke-linecap="round"/><path d="M14.5 34h14" stroke="#1d55c0" stroke-width="4.2" stroke-linecap="round"/></svg><div class="a" style="left:1661px;top:104px;width:1px;height:112px;background:#dcdcdc"></div><svg class="a" style="left:1678px;top:106px;" width="40" height="40" viewBox="0 0 40 40"><rect x="2.5" y="2.5" width="34.5" height="34.5" fill="none" stroke="#d9663b" stroke-width="1.6"/><rect x="7" y="7" width="11.5" height="11.5" fill="none" stroke="#d9663b" stroke-width="1.6"/><rect x="21.5" y="7" width="11.5" height="11.5" fill="none" stroke="#d9663b" stroke-width="1.6"/><rect x="7" y="21.5" width="11.5" height="11.5" fill="none" stroke="#d9663b" stroke-width="1.6"/><rect x="21.5" y="21.5" width="11.5" height="11.5" fill="none" stroke="#d9663b" stroke-width="1.6"/></svg><div class="a" style="left:1734px;top:104px;width:1px;height:112px;background:#dcdcdc"></div><svg class="a" style="left:1762px;top:113px;" width="30" height="24" viewBox="0 0 30 24"><circle cx="8.7" cy="15.8" r="4.6" fill="none" stroke="#2ba6ec" stroke-width="3.7"/><circle cx="21.7" cy="15.8" r="4.6" fill="none" stroke="#1e9bf0" stroke-width="3.7"/><circle cx="15.2" cy="8.5" r="4.7" fill="none" stroke="#2ba6ec" stroke-width="3.7"/><path d="M10.5 9.5a4.7 4.7 0 0 0 9.4 0" fill="none" stroke="#ee4f6c" stroke-width="3.7"/></svg><div class="a" style="left:1819px;top:104px;width:1px;height:112px;background:#dcdcdc"></div><svg class="a" style="left:1882px;top:198px;" width="20" height="14" viewBox="0 0 20 14"><path d="M4 4l6 6 6-6" fill="none" stroke="#333" stroke-width="1.4"/></svg><div class="a" style="left:1545px;top:143px;width:162px;height:47px;box-sizing:border-box;border:1.5px solid #2a93e6;border-radius:9px;background:#eef6fd;overflow:hidden"><div style="position:absolute;left:0;top:0;width:46px;height:45px;background:linear-gradient(160deg,#1a8cf0,#3aa6ff);border-radius:7px"></div></div><svg class="a" style="left:1553px;top:151px;" width="32" height="30" viewBox="0 0 32 30"><circle cx="15.3" cy="9.8" r="3.6" fill="none" stroke="#fff" stroke-width="3.6"/><circle cx="8" cy="17.8" r="4.1" fill="none" stroke="#fff" stroke-width="3.6"/><path d="M19.5 14.3a4.1 4.1 0 1 1 -1.2 5.8" fill="none" stroke="#fff" stroke-width="3.6"/><path d="M11.8 19.5L16.5 13" stroke="#fff" stroke-width="3.4"/></svg><div class="t" style="left:1600px;top:160px;font-size:16px;color:#1d8fe3;font-weight:700;">拖拽至此上传</div><div class="a" style="left:89px;top:231px;width:54px;height:25px;border:1.2px solid #555;border-radius:13px;box-sizing:border-box;background:#fff"></div><div class="a" style="left:93px;top:235px;width:18px;height:18px;border-radius:50%;background:#5f5f5f"></div><div class="t" style="left:120px;top:237px;font-size:15px;color:#262626;font-weight:400;">关</div><svg class="a" style="left:154px;top:233px;" width="26" height="26" viewBox="0 0 26 26"><path d="M3.5 3.5h18v18.5H6l-2.5-2.5z" fill="#d38fdc" stroke="#9b3fb0" stroke-width="1.4" stroke-linejoin="round"/><rect x="7.5" y="3.8" width="10" height="6.5" fill="#fff" stroke="#9b3fb0" stroke-width="1.2"/><rect x="8" y="15" width="9" height="7" fill="#fff" stroke="#9b3fb0" stroke-width="1.2"/></svg><svg class="a" style="left:233px;top:233px;" width="24" height="26" viewBox="0 0 24 26"><path d="M2.6 3.2V11.2H10.6M2.6 11.2L8.8 5a6.4 6.4 0 0 1 9 9L9 22.8" fill="none" stroke="#444" stroke-width="1.5"/></svg><svg class="a" style="left:362px;top:241px;" width="10" height="8" viewBox="0 0 10 8"><path d="M2 2.5l3.0 3.0l3.0 -3.0" fill="none" stroke="#333" stroke-width="1.3"/></svg><svg class="a" style="left:381px;top:233px;" width="26" height="26" viewBox="0 0 26 26"><path d="M18.4 4.6A9.4 9.4 0 1 1 9.5 4.3" fill="none" stroke="#a0a0a0" stroke-width="1.4"/><path d="M3.2 3.5H10V10.2" fill="none" stroke="#a0a0a0" stroke-width="1.5"/></svg><svg class="a" style="left:648px;top:241px;" width="10" height="8" viewBox="0 0 10 8"><path d="M2 2.5l3.0 3.0l3.0 -3.0" fill="none" stroke="#333" stroke-width="1.3"/></svg><svg class="a" style="left:676px;top:237px;" width="14" height="14" viewBox="0 0 14 14"><path d="M3 3.5h8" stroke="#333" stroke-width="1.2"/><path d="M3.5 6.5l3.5 4 3.5-4" fill="none" stroke="#333" stroke-width="1.3"/></svg><svg class="a" style="left:742px;top:270px;" width="14" height="12" viewBox="0 0 14 12"><path d="M12.5 1v6.5H2M5 4.5L2 7.5 5 10.5" fill="none" stroke="#8a8a8a" stroke-width="1.1"/></svg><svg class="a" style="left:1106px;top:374px;" width="14" height="12" viewBox="0 0 14 12"><path d="M12.5 1v6.5H2M5 4.5L2 7.5 5 10.5" fill="none" stroke="#8a8a8a" stroke-width="1.1"/></svg><svg class="a" style="left:732px;top:427px;" width="14" height="12" viewBox="0 0 14 12"><path d="M12.5 1v6.5H2M5 4.5L2 7.5 5 10.5" fill="none" stroke="#8a8a8a" stroke-width="1.1"/></svg><svg class="a" style="left:732px;top:479px;" width="14" height="12" viewBox="0 0 14 12"><path d="M12.5 1v6.5H2M5 4.5L2 7.5 5 10.5" fill="none" stroke="#8a8a8a" stroke-width="1.1"/></svg><svg class="a" style="left:602px;top:517px;" width="14" height="12" viewBox="0 0 14 12"><path d="M12.5 1v6.5H2M5 4.5L2 7.5 5 10.5" fill="none" stroke="#8a8a8a" stroke-width="1.1"/></svg><svg class="a" style="left:257px;top:1056px;" width="22" height="20" viewBox="0 0 22 20"><path d="M9 3.5H3.5v14H9" fill="none" stroke="#444" stroke-width="1.5"/><path d="M7 3.5h5l4 4V11" fill="none" stroke="#444" stroke-width="1.5"/><path d="M11.5 12.5l6 6M17.5 12.5l-6 6" stroke="#444" stroke-width="1.4"/></svg><svg class="a" style="left:575px;top:1056px;" width="22" height="20" viewBox="0 0 22 20"><path d="M2.5 3h17M2.5 6h17" stroke="#444" stroke-width="1.2"/><path d="M2.5 3v14.5H8" fill="none" stroke="#444" stroke-width="1.3"/><path d="M4.5 9.5h3M4.5 12.5h3" stroke="#444" stroke-width="1"/><circle cx="14" cy="13" r="4.8" fill="none" stroke="#444" stroke-width="1.5"/><circle cx="14" cy="13" r="2" fill="#333"/></svg><svg class="a" style="left:615px;top:1056px;" width="22" height="20" viewBox="0 0 22 20"><circle cx="9" cy="3.5" r="2" fill="none" stroke="#444" stroke-width="1.3"/><path d="M2.5 6.5l6.5 2 6-2.5M9 8.5v4l-3.5 5.5M9 12.5l2.5 3" fill="none" stroke="#444" stroke-width="1.4"/><text x="13" y="18.5" font-family="Liberation Sans" font-size="9" font-weight="700" fill="#444">?</text></svg><svg class="a" style="left:1469px;top:1054px;" width="24" height="24" viewBox="0 0 24 24"><path d="M3 7V3.5h3.5M17.5 3.5H21V7M3 17v3.5h3.5M17.5 20.5H21V17" fill="none" stroke="#444" stroke-width="1.4"/><path d="M7.5 5.5h6l3.5 3.5v9.5H7.5z" fill="none" stroke="#444" stroke-width="1.4"/></svg><svg class="a" style="left:1553px;top:1056px;" width="20" height="20" viewBox="0 0 20 20"><path d="M2.5 4.5h6.5l1 1 1-1h6.5v12h-6.5l-1 1-1-1H2.5z" fill="none" stroke="#444" stroke-width="1.4"/><path d="M10 5.5v11M4.5 8h3.5M4.5 10.5h3.5M4.5 13h3.5M12 8h3.5M12 10.5h3.5M12 13h3.5" stroke="#444" stroke-width="1"/></svg><div class="a" style="left:1590px;top:1053px;width:49px;height:27px;background:#e1e1e1"></div><svg class="a" style="left:1604px;top:1056px;" width="20" height="20" viewBox="0 0 20 20"><rect x="3.5" y="3" width="13" height="15" fill="none" stroke="#444" stroke-width="1.4"/><path d="M6 6.5h8M6 9h8M6 11.5h8M6 14h8" stroke="#444" stroke-width="1.1"/></svg><svg class="a" style="left:1653px;top:1056px;" width="22" height="20" viewBox="0 0 22 20"><path d="M11 17.5H3.5V3h13v7" fill="none" stroke="#444" stroke-width="1.4"/><path d="M6 6.5h7.5M6 9h5M6 11.5h4M6 14h3.5" stroke="#444" stroke-width="1.1"/><circle cx="15.5" cy="14.5" r="4.5" fill="#fff" stroke="#444" stroke-width="1.3"/><path d="M11 14.5h9M15.5 10v9M13.5 10.5c-1.5 2.5-1.5 5.5 0 8M17.5 10.5c1.5 2.5 1.5 5.5 0 8" fill="none" stroke="#444" stroke-width="0.9"/></svg><div class="a" style="left:1697px;top:1066px;width:9px;height:1.3px;background:#444"></div><div class="a" style="left:1712px;top:1066px;width:125px;height:1px;background:#777"></div><div class="a" style="left:1772px;top:1059px;width:6px;height:16px;background:#5a5a5a;border-radius:1px"></div><svg class="a" style="left:1840px;top:1058px;" width="16" height="16" viewBox="0 0 16 16"><path d="M3 8h10M8 3v10" stroke="#444" stroke-width="1.3"/></svg><svg class="a" style="left:1901px;top:268px;" width="17" height="14" viewBox="0 0 17 14"><path d="M3.5 11L8.5 4.5 13.5 11z" fill="#707070" stroke="#707070" stroke-width="1.2" stroke-linejoin="round"/></svg><svg class="a" style="left:1901px;top:1034px;" width="17" height="14" viewBox="0 0 17 14"><path d="M3.5 3L8.5 9.5 13.5 3z" fill="#707070" stroke="#707070" stroke-width="1.2" stroke-linejoin="round"/></svg><div class="a" style="left:1904px;top:723px;width:11px;height:204px;background:#787878;border-radius:6px"></div><svg class="a" style="left:1853px;top:808px;" width="54" height="54" viewBox="0 0 54 54"><defs><linearGradient id="avbg" x1="0" y1="0" x2="0" y2="1"><stop offset="0" stop-color="#ffffff"/><stop offset="1" stop-color="#c9d8f5"/></linearGradient><clipPath id="avc"><circle cx="26.6" cy="27" r="23.6"/></clipPath></defs><circle cx="26.6" cy="27.5" r="24.5" fill="rgba(0,0,0,0.10)"/><circle cx="26.6" cy="27" r="24.3" fill="#fbfcff"/><g clip-path="url(#avc)"><rect x="0" y="0" width="54" height="54" fill="url(#avbg)"/><path d="M14 54c1-6 6-8 12.5-8s11.5 2 12.5 8z" fill="#151515"/><rect x="21.5" y="38" width="10" height="10" rx="3" fill="#f2c4b4"/><path d="M12.5 40c-1-12 0-20 4-25 3.5-4 9-6 14-5 6 1 9.5 5 11 10 1 4 .5 11-.5 19l-3.5-.5c.5-5 0-10-1.5-14-3 3-9 4.5-17 4.5-.8 3.5-1 7-.5 11z" fill="#4a312a"/><ellipse cx="27.8" cy="31" rx="9.8" ry="11.8" fill="#f6d2c6"/><path d="M17.8 26c1-6 5-9.5 11-9.5 3 0 6.5 1.5 8.5 4.5l.5 5c-5-2.5-13-1-20 0z" fill="#4a312a"/><ellipse cx="23.3" cy="30" rx="2.2" ry="2.4" fill="#2a1a16"/><ellipse cx="32.3" cy="30" rx="2.2" ry="2.4" fill="#2a1a16"/><ellipse cx="27.8" cy="37.5" rx="2" ry="1" fill="#d9907f"/></g></svg>
</body></html>
